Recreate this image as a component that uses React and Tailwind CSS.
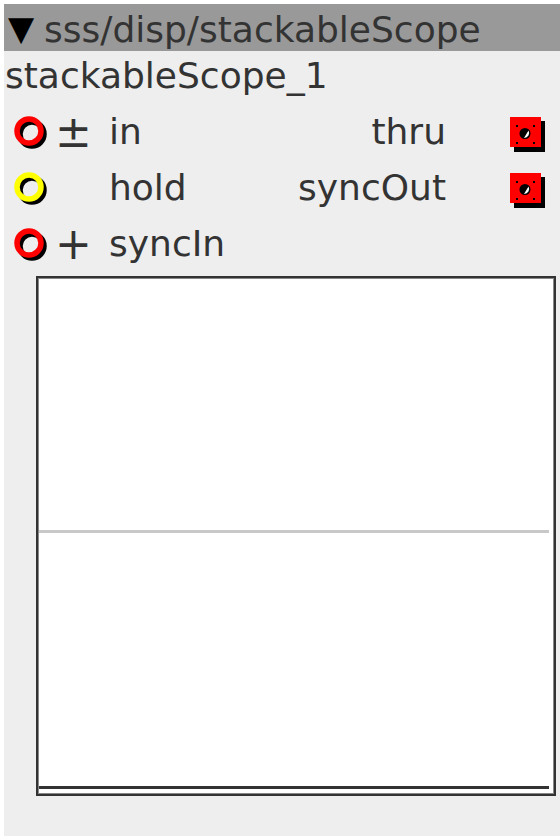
const FONT = { fontFamily: '"DejaVu Sans", Verdana, sans-serif' };

function InPort({ color }) {
  return (
    <svg width="36" height="36" viewBox="0 0 36 36" className="shrink-0">
      <circle cx="18" cy="18" r="12" fill="none" stroke="#000" strokeWidth="5.5" />
      <circle cx="15" cy="15" r="12" fill="none" stroke={color} strokeWidth="5.5" />
    </svg>
  );
}

function OutPort() {
  return (
    <svg width="35" height="35" viewBox="0 0 35 35" className="shrink-0">
      <rect x="4" y="4" width="31" height="31" fill="#000" />
      <rect x="0" y="0" width="31" height="30" fill="#f00" />
      {[[6, 8], [23, 8], [6, 25], [23, 25]].map(([x, y]) => (
        <rect key={x + "-" + y} x={x} y={y} width="2" height="2" fill="#000" />
      ))}
      <circle cx="15" cy="16.5" r="5.5" fill="#000" />
      <path d="M18.5 13.5 A5 5 0 0 1 14 21 Z" fill="#fff" />
    </svg>
  );
}

const rows = [
  { color: "#f00", sign: "±", label: "in", out: "thru" },
  { color: "#ff0", sign: "", label: "hold", out: "syncOut" },
  { color: "#f00", sign: "+", label: "syncIn", out: null },
];

export default function App() {
  return (
    <div className="h-[840px] w-[560px] bg-white pl-1 pt-1 text-[#333]" style={FONT}>
      <div className="flex h-[832px] flex-col bg-[#eeeeee]">
        <div className="flex h-[47px] items-center bg-[#999999] pl-1 text-[36px] leading-none">
          <span className="w-[36px] text-[34px] text-black">▼</span>
          <span className="pt-1">sss/disp/stackableScope</span>
        </div>
        <div className="flex h-[53px] items-center pl-px text-[36px] leading-none">
          <span className="-mt-1">stackableScope_1</span>
        </div>
        {rows.map((r) => (
          <div key={r.label} className="flex h-[56px] items-center text-[36px] leading-none">
            <div className="ml-[10px] w-[36px] pt-1">
              <InPort color={r.color} />
            </div>
            <span className="ml-[5px] w-[54px] text-[44px]">{r.sign}</span>
            <span className="flex-1">{r.label}</span>
            {r.out && (
              <>
                <span className="mr-[64px]">{r.out}</span>
                <div className="mr-[15px] w-[35px] pt-1">
                  <OutPort />
                </div>
              </>
            )}
          </div>
        ))}
        <div className="ml-8 mt-1 flex h-[520px] w-[520px] border-2 border-[#333]">
          <div className="flex flex-1 flex-col border border-[#888] bg-white">
            <div className="h-[251px]" />
            <div className="mr-[4px] h-[3px] bg-[#c8c8c8]" />
            <div className="flex-1" />
            <div className="mr-[4px] h-[3px] bg-[#333]" />
            <div className="h-[4px]" />
          </div>
        </div>
      </div>
    </div>
  );
}
